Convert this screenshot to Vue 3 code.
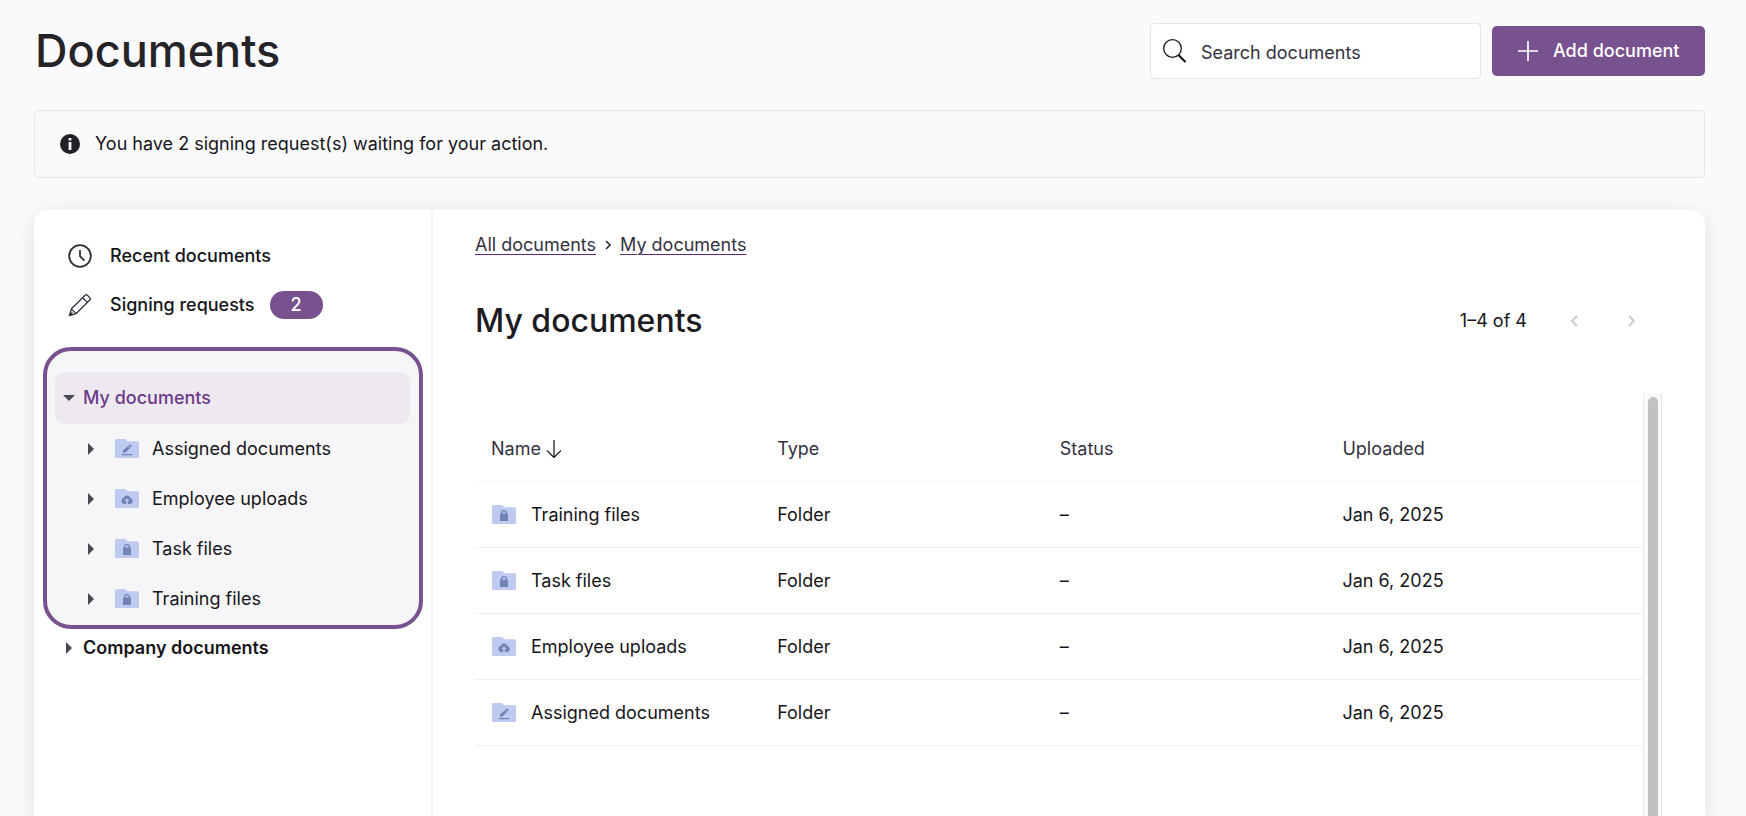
<script setup>
import { ref } from 'vue'

const search = ref('')

const folders = [
  { name: 'Assigned documents', icon: 'edit' },
  { name: 'Employee uploads', icon: 'upload' },
  { name: 'Task files', icon: 'lock' },
  { name: 'Training files', icon: 'lock' },
]

const columns = ['Type', 'Status', 'Uploaded']

const rows = [...folders].reverse().map((folder) => ({
  ...folder,
  type: 'Folder',
  status: '–',
  uploaded: 'Jan 6, 2025',
}))
</script>

<template>
  <div class="page">
    <svg class="sprite" aria-hidden="true">
      <symbol id="folder-lock" viewBox="0 0 24 20">
        <path class="folder-shape" d="M1.500 0h8.800l2 2.200H22.500a1.500 1.500 0 0 1 1.500 1.500V17.500a1.500 1.500 0 0 1-1.500 1.500H1.500a1.500 1.500 0 0 1-1.500-1.500V1.500a1.500 1.500 0 0 1 1.500-1.500z" />
        <path class="folder-mark" d="M8 8.500h1V8a3 3 0 0 1 6 0v.5h1V16H8zM10.200 8.500h3.600V8a1.800 1.800 0 0 0-3.600 0z" fill-rule="evenodd" />
      </symbol>
      <symbol id="folder-upload" viewBox="0 0 24 20">
        <path class="folder-shape" d="M1.500 0h8.800l2 2.200H22.500a1.500 1.500 0 0 1 1.500 1.500V17.500a1.500 1.500 0 0 1-1.500 1.500H1.500a1.500 1.500 0 0 1-1.500-1.500V1.500a1.500 1.500 0 0 1 1.500-1.500z" />
        <path class="folder-mark" d="M9.600 15a3 3 0 0 1-.9-5.900 3.600 3.600 0 0 1 6.900.2A2.900 2.900 0 0 1 15.200 15h-2.400v-3h1.700L12 9.200 9.500 12h1.700v3z" />
      </symbol>
      <symbol id="folder-edit" viewBox="0 0 24 20">
        <path class="folder-shape" d="M1.500 0h8.800l2 2.200H22.500a1.500 1.500 0 0 1 1.500 1.500V17.500a1.500 1.500 0 0 1-1.500 1.500H1.500a1.500 1.500 0 0 1-1.500-1.500V1.500a1.500 1.500 0 0 1 1.500-1.500z" />
        <path class="folder-mark" d="M8 13.800v-2.200l5-4.700 2.100 2-5 4.900zM13.600 6.400l1.200-1.100 2.100 2-1.200 1.100zM6.800 14.900h10.400v1.300H6.800z" />
      </symbol>
    </svg>

    <header class="topbar">
      <h1>Documents</h1>
      <div class="actions">
        <label class="search">
          <svg class="search-icon" viewBox="0 0 24 24" aria-hidden="true">
            <circle cx="9.500" cy="9.500" r="8.800" />
            <path d="M15.500 16l7 7" class="handle" />
          </svg>
          <input v-model="search" type="text" placeholder="Search documents" aria-label="Search documents" />
        </label>
        <button type="button" class="add">
          <svg viewBox="0 0 20 20" aria-hidden="true"><path d="M10 0v20M0 10h20" /></svg>
          Add document
        </button>
      </div>
    </header>

    <div class="banner" role="status">
      <svg viewBox="0 0 20 20" aria-hidden="true">
        <circle cx="10" cy="10" r="10" />
        <path d="M8.600 8h2.800v8H8.600zM8.600 4h2.800v2.600H8.600z" />
      </svg>
      <span>You have 2 signing request(s) waiting for your action.</span>
    </div>

    <div class="card">
      <aside class="sidebar">
        <nav class="shortcuts" aria-label="Shortcuts">
          <a href="#recent">
            <svg viewBox="0 0 24 24" aria-hidden="true">
              <circle cx="12" cy="12" r="10.800" stroke-width="1.800" />
              <path d="M12 6v6.200l4.400 4.400" stroke-width="1.800" />
            </svg>
            <span>Recent documents</span>
          </a>
          <a href="#signing">
            <svg viewBox="0 0 24 24" aria-hidden="true">
              <path d="M1.500 22.500l1.900-6.600L17.300 2q.9-.9 1.800 0l2.900 2.900q.9.900 0 1.800L8.100 20.600zM14.600 4.700l4.700 4.700M3.400 15.900l4.700 4.700M1.500 22.500l3-3" />
            </svg>
            <span>Signing requests</span>
            <span class="badge">2</span>
          </a>
        </nav>

        <nav aria-label="Folders">
          <div class="highlight">
            <button type="button" class="node root selected" aria-expanded="true">
              <svg class="caret" viewBox="0 0 12 12" aria-hidden="true"><path d="M0 3h12L6 9z" /></svg>
              My documents
            </button>
            <button v-for="f in folders" :key="f.name" type="button" class="node child" aria-expanded="false">
              <svg class="caret" viewBox="0 0 12 12" aria-hidden="true"><path d="M3 0l6 6-6 6z" /></svg>
              <svg class="folder" aria-hidden="true"><use :href="'#folder-' + f.icon" /></svg>
              {{ f.name }}
            </button>
          </div>
          <button type="button" class="node root company" aria-expanded="false">
            <svg class="caret" viewBox="0 0 12 12" aria-hidden="true"><path d="M3 0l6 6-6 6z" /></svg>
            Company documents
          </button>
        </nav>
      </aside>

      <main class="content">
        <nav class="crumbs" aria-label="Breadcrumb">
          <a href="#all">All documents</a>
          <svg viewBox="0 0 6 10" aria-hidden="true"><path d="M1 1l4 4-4 4" /></svg>
          <a href="#my">My documents</a>
        </nav>

        <div class="heading">
          <h2>My documents</h2>
          <div class="pager">
            <span>1–4 of 4</span>
            <button type="button" disabled aria-label="Previous page">
              <svg viewBox="0 0 8 12" aria-hidden="true"><path d="M7 1L2 6l5 5" /></svg>
            </button>
            <button type="button" disabled aria-label="Next page">
              <svg viewBox="0 0 8 12" aria-hidden="true"><path d="M1 1l5 5-5 5" /></svg>
            </button>
          </div>
        </div>

        <div class="scroller">
          <div class="table-area">
            <table>
              <colgroup>
                <col class="col-name" />
                <col class="col-type" />
                <col class="col-status" />
                <col class="col-uploaded" />
              </colgroup>
              <thead>
                <tr>
                  <th scope="col" aria-sort="descending">
                    <button type="button" class="sort">
                      Name
                      <svg viewBox="0 0 16 18" aria-hidden="true"><path d="M8 0v17M1 10.500l7 7 7-7" /></svg>
                    </button>
                  </th>
                  <th v-for="c in columns" :key="c" scope="col">{{ c }}</th>
                </tr>
              </thead>
              <tbody>
                <tr v-for="r in rows" :key="r.name">
                  <td>
                    <div class="name">
                      <svg class="folder" aria-hidden="true"><use :href="'#folder-' + r.icon" /></svg>
                      {{ r.name }}
                    </div>
                  </td>
                  <td>{{ r.type }}</td>
                  <td>{{ r.status }}</td>
                  <td>{{ r.uploaded }}</td>
                </tr>
              </tbody>
            </table>
          </div>
          <div class="track"><div class="thumb"></div></div>
        </div>
      </main>
    </div>
  </div>
</template>

<style>
body {
  margin: 0;
  background: #fafafc;
}
</style>

<style scoped>
.page {
  display: flex;
  flex-direction: column;
  box-sizing: border-box;
  min-height: 100vh;
  padding: 23px 41px 0 34px;
  font-family: Inter, "Liberation Sans", sans-serif;
  font-size: 18px;
  font-weight: 400;
  line-height: 24px;
  color: #16151a;
  background: #fafafc;
}

.sprite {
  position: absolute;
  width: 0;
  height: 0;
}

.folder-shape { fill: #bfcaf1; }
.folder-mark { fill: #7184b5; }

button,
input {
  font: inherit;
  color: inherit;
}

button {
  margin: 0;
  padding: 0;
  border: 0;
  background: none;
  cursor: pointer;
}

svg {
  flex: none;
  fill: none;
  stroke: none;
}

.topbar {
  display: flex;
  align-items: center;
  justify-content: space-between;
}

h1 {
  margin: 0;
  padding-left: 1px;
  font-size: 45px;
  font-weight: 500;
  line-height: 56px;
  color: #242327;
}

.actions {
  display: flex;
  align-items: center;
  gap: 11px;
}

.search {
  display: flex;
  align-items: center;
  box-sizing: border-box;
  width: 331px;
  height: 56px;
  padding: 0 12px;
  gap: 14px;
  border: 1px solid #e3e3e8;
  border-radius: 4px;
  background: #fff;
}

.search-icon {
  width: 24px;
  height: 24px;
  stroke: #18171c;
  stroke-width: 1.3;
}

.search-icon .handle { stroke-width: 2.2; }

.search input {
  flex: 1;
  min-width: 0;
  padding: 3px 0 0;
  border: 0;
  outline: 0;
  background: none;
}

.search input::placeholder {
  color: #34323f;
  opacity: 1;
}

.add {
  display: flex;
  align-items: center;
  min-width: 213px;
  height: 50px;
  padding: 0 22px 0 26px;
  gap: 15px;
  border-radius: 5px;
  background: #78528e;
  color: #fff;
  font-weight: 500;
}

.add svg {
  width: 20px;
  height: 20px;
  stroke: #fff;
  stroke-width: 1.7;
}

.banner {
  display: flex;
  align-items: center;
  margin-top: 31px;
  padding: 21px 25px;
  gap: 15px;
  border: 1px solid #e3e3e8;
  border-radius: 5px;
}

.banner svg {
  width: 20px;
  height: 20px;
  fill: #222125;
}

.banner path { fill: #fafafc; }

.card {
  display: flex;
  flex: 1;
  margin-top: 32px;
  border-radius: 14px 14px 0 0;
  background: #fff;
  box-shadow: 0 4px 22px rgba(20, 18, 30, 0.1);
}

.sidebar {
  flex: none;
  box-sizing: border-box;
  width: 399px;
  padding: 21px 8px 0 9px;
  border-right: 2px solid #f5f5f7;
}

.shortcuts {
  display: flex;
  flex-direction: column;
  margin-bottom: 18px;
  padding-left: 25px;
}

.shortcuts a {
  display: flex;
  align-items: center;
  height: 49px;
  gap: 18px;
  color: inherit;
  font-weight: 500;
  text-decoration: none;
}

.shortcuts svg {
  width: 24px;
  height: 24px;
  stroke: #2f2d3a;
  stroke-width: 1.3;
}

.badge {
  width: 53px;
  margin-left: -3px;
  border-radius: 14px;
  background: #78528e;
  color: #fff;
  line-height: 28px;
  text-align: center;
}

.highlight {
  padding: 21px 9px 1px 8px;
  border: 4px solid #78528e;
  border-radius: 28px;
  background: #f6f6f9;
}

.node {
  display: flex;
  align-items: center;
  width: 100%;
  height: 50px;
  text-align: left;
}

.root {
  padding-left: 8px;
  gap: 8px;
  font-weight: 500;
}

.selected {
  height: 52px;
  border-radius: 10px;
  background: #eee9f0;
  color: #6b3a8a;
}

.child {
  padding-left: 30px;
}

.child .folder {
  margin: 0 13px 0 18px;
}

.company {
  height: 38px;
  padding-left: 20px;
  font-weight: 600;
}

.caret {
  width: 12px;
  height: 12px;
  fill: #4a4854;
}

.folder {
  width: 24px;
  height: 20px;
}

.content {
  display: flex;
  flex: 1;
  flex-direction: column;
  min-width: 0;
  padding: 23px 43px 0 42px;
}

.crumbs {
  display: flex;
  align-items: center;
  gap: 9px;
}

.crumbs a {
  color: #34323f;
  text-decoration: underline;
  text-decoration-color: #5b2a7c;
  text-decoration-thickness: 1px;
  text-underline-offset: 3px;
}

.crumbs svg {
  width: 6px;
  height: 10px;
  stroke: #2f2d3a;
  stroke-width: 1.6;
}

.heading {
  display: flex;
  align-items: center;
  justify-content: space-between;
  margin-top: 44px;
}

h2 {
  margin: 0;
  font-size: 32px;
  font-weight: 500;
  line-height: 40px;
  color: #1c1b1f;
}

.pager {
  display: flex;
  align-items: center;
  padding-right: 1px;
}

.pager button {
  display: flex;
  align-items: center;
  justify-content: center;
  width: 58px;
  height: 40px;
}

.pager span { margin-right: 18px; }

.pager svg {
  width: 8px;
  height: 12px;
  stroke: #c9c9d0;
  stroke-width: 1.8;
}

.scroller {
  display: flex;
  flex: 1;
  margin-top: 52px;
}

.table-area {
  flex: 1;
  min-width: 0;
  padding-top: 23px;
}

table {
  width: 100%;
  table-layout: fixed;
  border-collapse: collapse;
}

.col-name { width: 24.5%; }
.col-type { width: 24.2%; }
.col-status { width: 24.2%; }
.col-uploaded { width: 27.1%; }

th,
td {
  height: 65px;
  padding: 0 16px;
  border-bottom: 1px solid #efeff1;
  text-align: left;
}

th {
  border-bottom-color: #f5f5f7;
  color: #34323f;
  font-weight: 400;
}

.sort {
  display: flex;
  align-items: center;
  gap: 5px;
}

.sort svg {
  width: 16px;
  height: 18px;
  stroke: #232227;
  stroke-width: 1.3;
}

.name {
  display: flex;
  align-items: center;
  padding-left: 1px;
  gap: 15px;
}

.track {
  display: flex;
  flex: none;
  width: 17px;
  padding-top: 4px;
  justify-content: center;
  border: solid #e8e8e8;
  border-width: 0 1px;
  background: #fafafa;
}

.thumb {
  width: 10px;
  border-radius: 5px 5px 0 0;
  background: #c1c1c1;
}
</style>
